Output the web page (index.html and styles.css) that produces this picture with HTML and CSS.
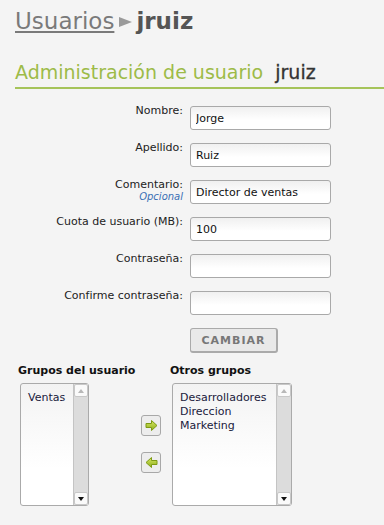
FILE: index.html
```html
<!DOCTYPE html>
<html lang="es">
<head>
  <meta charset="UTF-8" />
  <meta name="viewport" content="width=device-width, initial-scale=1.0"/>
  <title>Usuario</title>
  <link rel="stylesheet" href="styles.css">
</head>
<body>

  <h1 class="migas"><a href="#">Usuarios</a><span class="sep"></span><b>jruiz</b></h1>

  <h2 class="titulo">Administración de usuario <span class="quien">jruiz</span></h2>

  <form class="formulario">
    <div class="fila"><label>Nombre:</label><input class="campo" type="text" value="Jorge"></div>
    <div class="fila"><label>Apellido:</label><input class="campo" type="text" value="Ruiz"></div>
    <div class="fila"><label>Comentario:<small>Opcional</small></label><input class="campo" type="text" value="Director de ventas"></div>
    <div class="fila"><label>Cuota de usuario (MB):</label><input class="campo" type="text" value="100"></div>
    <div class="fila"><label>Contraseña:</label><input class="campo" type="password"></div>
    <div class="fila"><label>Confirme contraseña:</label><input class="campo" type="password"></div>
    <div class="fila"><label></label><button type="button" class="btnCambiar">CAMBIAR</button></div>
  </form>

  <div class="grupos">
    <div class="col">
      <h4>Grupos del usuario</h4>
      <div class="lista corta">
        <div class="items">
          <div>Ventas</div>
        </div>
        <div class="scroll"><span class="sube"></span><span class="pista"></span><span class="baja"></span></div>
      </div>
    </div>

    <div class="mover">
      <button type="button" class="flecha">
        <svg width="13" height="11" viewBox="0 0 13 11"><defs><linearGradient id="g1" x1="0" y1="0" x2="0" y2="1"><stop offset="0" stop-color="#d6e860"/><stop offset="1" stop-color="#8fae1c"/></linearGradient></defs><polygon points="1,3.5 6.5,3.5 6.5,0.5 12,5.5 6.5,10.5 6.5,7.5 1,7.5" fill="url(#g1)" stroke="#7d9a14" stroke-width="1" stroke-linejoin="round"/></svg>
      </button>
      <button type="button" class="flecha">
        <svg width="13" height="11" viewBox="0 0 13 11"><polygon points="12,3.5 6.5,3.5 6.5,0.5 1,5.5 6.5,10.5 6.5,7.5 12,7.5" fill="url(#g1)" stroke="#7d9a14" stroke-width="1" stroke-linejoin="round"/></svg>
      </button>
    </div>

    <div class="col otros">
      <h4>Otros grupos</h4>
      <div class="lista larga">
        <div class="items">
          <div>Desarrolladores</div>
          <div>Direccion</div>
          <div>Marketing</div>
        </div>
        <div class="scroll"><span class="sube"></span><span class="pista"></span><span class="baja"></span></div>
      </div>
    </div>
  </div>

</body>
</html>
```

FILE: styles.css
```css
body {
  font-family: "DejaVu Sans", Verdana, sans-serif;
  font-size: 11px;
  margin: 0;
  padding: 8px 0 0 15px;
  background-color: #f4f4f4;
  color: #222;
}

.migas {
  margin: 0;
  font-size: 23px;
  font-weight: normal;
  display: flex;
  align-items: center;
}

.migas a {
  color: #7a7a7a;
  text-decoration: underline;
  text-underline-offset: 2px;
}

.migas .sep {
  width: 0;
  height: 0;
  border-left: 13px solid #9a9a9a;
  border-top: 5px solid transparent;
  border-bottom: 5px solid transparent;
  margin: 2px 4px 0 5px;
}

.migas b {
  color: #555;
}

.titulo {
  margin: 27px 0 0 0;
  padding-bottom: 4px;
  font-size: 19px;
  font-weight: normal;
  color: #9dbb48;
  border-bottom: 2px solid #a6c45a;
}

.titulo .quien {
  color: #333;
  margin-left: 6px;
  -webkit-text-stroke: 0.3px #333;
}

.formulario {
  padding-top: 15px;
}

.fila {
  display: flex;
  align-items: flex-start;
  margin-bottom: 11px;
}

.fila label {
  width: 168px;
  margin-right: 7px;
  text-align: right;
  line-height: 13px;
  color: #222;
}

.fila label small {
  display: block;
  font-size: 10px;
  font-style: italic;
  line-height: 11px;
  color: #3a6fb4;
}

.campo {
  box-sizing: border-box;
  width: 141px;
  height: 24px;
  margin: 2px 0 0 0;
  padding: 1px 5px 0 5px;
  border: 1px solid #a9a9a9;
  border-radius: 3px;
  background: linear-gradient(#f0f0f0, #ffffff 60%);
  font-family: "DejaVu Sans", Verdana, sans-serif;
  font-size: 11px;
  color: #111;
}

.btnCambiar {
  box-sizing: border-box;
  width: 88px;
  height: 25px;
  margin-top: 2px;
  padding: 0;
  border: 1px solid #aaa;
  border-bottom-width: 2px;
  border-right-width: 2px;
  border-radius: 3px;
  background: #e9e9e9;
  font-family: "DejaVu Sans", Verdana, sans-serif;
  font-size: 11px;
  font-weight: bold;
  letter-spacing: 1px;
  color: #777;
}

.grupos {
  display: flex;
  margin: 3px 0 0 3px;
}

.grupos h4 {
  margin: 0 0 6px 0;
  font-size: 11px;
  line-height: 13px;
  color: #111;
}

.col {
  width: 123px;
}

.otros {
  width: auto;
  margin-left: 9px;
}

.lista {
  box-sizing: border-box;
  display: flex;
  margin-left: 2px;
  height: 123px;
  border: 1px solid #aaa;
  border-radius: 3px;
  background: linear-gradient(#f3f3f3, #ffffff 70%);
  color: #1a1a3c;
}

.corta {
  width: 69px;
}

.larga {
  width: 120px;
}

.items {
  flex: 1;
  padding: 7px 0 0 7px;
  line-height: 14px;
}

.scroll {
  display: flex;
  flex-direction: column;
  width: 14px;
  border-left: 1px solid #c4c4c4;
  background: #dcdcdc;
}

.scroll span {
  display: block;
}

.scroll .pista {
  flex: 1;
}

.sube, .baja {
  height: 13px;
  box-sizing: border-box;
  border: 1px solid #c8c8c8;
  border-radius: 2px;
  background: #fafafa;
  position: relative;
}

.sube::after, .baja::after {
  content: "";
  position: absolute;
  left: 3px;
  top: 4px;
  border-left: 3.5px solid transparent;
  border-right: 3.5px solid transparent;
}

.sube::after {
  border-bottom: 4px solid #b8b8b8;
}

.baja::after {
  border-top: 4px solid #111;
}

.mover {
  display: flex;
  flex-direction: column;
  gap: 16px;
  padding-top: 51px;
}

.flecha {
  box-sizing: border-box;
  width: 20px;
  height: 21px;
  padding: 0;
  border: 1px solid #a8a8a8;
  border-radius: 3px;
  background: #ededed;
  display: flex;
  align-items: center;
  justify-content: center;
}

.flecha svg {
  display: block;
}
```
